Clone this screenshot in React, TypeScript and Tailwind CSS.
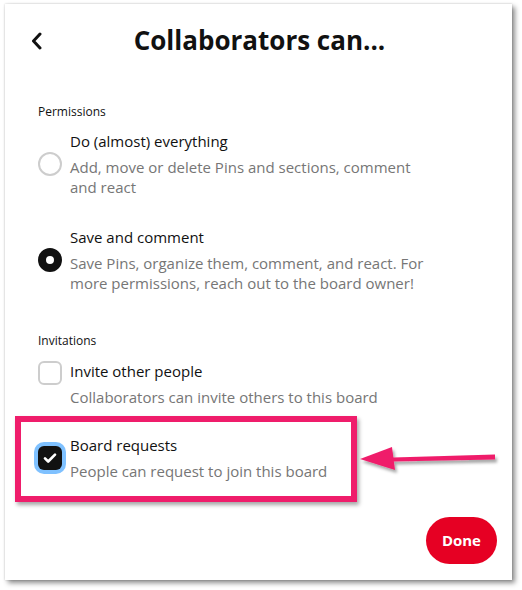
import { ReactNode } from "react";

const FONT = { fontFamily: '"Open Sans", "Noto Sans", "Liberation Sans", sans-serif' };

function Radio({ checked }: { checked?: boolean }) {
  return checked ? (
    <span className="w-6 h-6 shrink-0 rounded-full border-[8px] border-[#111111] bg-white" />
  ) : (
    <span className="w-6 h-6 shrink-0 rounded-full border-2 border-[#cdcdcd] bg-white" />
  );
}

function Checkbox({ checked }: { checked?: boolean }) {
  if (!checked) {
    return <span className="w-6 h-6 shrink-0 rounded-[6px] border-2 border-[#cdcdcd] bg-white" />;
  }
  return (
    <span className="w-6 h-6 shrink-0 rounded-[6px] bg-[#111111] flex items-center justify-center ring-4 ring-[#7fc1ff]">
      <svg width="16" height="16" viewBox="0 0 24 24" fill="none">
        <path d="M4.5 12.5l4.8 4.8L19.5 7" stroke="white" strokeWidth="4" strokeLinecap="round" strokeLinejoin="round" />
      </svg>
    </span>
  );
}

function Option({
  control,
  title,
  desc,
  align = "items-center",
}: {
  control: ReactNode;
  title: string;
  desc: ReactNode;
  align?: string;
}) {
  return (
    <div className={`flex ${align} gap-2`}>
      {control}
      <div className="flex flex-col">
        <div className="text-[15px] leading-5 text-[#111111]">{title}</div>
        <div className="mt-[6px] text-[15px] leading-5 text-[#767676]">{desc}</div>
      </div>
    </div>
  );
}

export default function App() {
  return (
    <div className="relative w-[522px] h-[590px] bg-white pt-[4px] pl-[5px]" style={FONT}>
      {/* card */}
      <div className="w-[507px] h-[576px] bg-white shadow-[3px_3px_5px_rgba(0,0,0,0.45),0_0_2px_rgba(0,0,0,0.2)] flex flex-col pt-[18px] pl-[33px] pr-[15px]">
        {/* header */}
        <div className="relative h-9 flex items-center justify-center -ml-[33px] -mr-[15px]">
          <svg className="absolute left-[25px] top-[10px]" width="14" height="18" viewBox="0 0 14 18" fill="none">
            <path d="M10 2L3.5 9L10 16" stroke="#111111" strokeWidth="3" strokeLinecap="round" strokeLinejoin="round" />
          </svg>
          <h1 className="text-[26px] leading-9 font-bold text-[#111111] pl-[2px]">Collaborators can...</h1>
        </div>

        <div className="mt-[46px] text-[12px] leading-4 text-[#111111]">Permissions</div>
        <div className="mt-[11px]">
          <Option
            control={<Radio />}
            title="Do (almost) everything"
            desc={<>Add, move or delete Pins and sections, comment<br />and react</>}
          />
        </div>
        <div className="mt-[30px]">
          <Option
            control={<Radio checked />}
            title="Save and comment"
            desc={<>Save Pins, organize them, comment, and react. For<br />more permissions, reach out to the board owner!</>}
          />
        </div>

        <div className="mt-[40px] text-[12px] leading-4 text-[#111111]">Invitations</div>
        <div className="mt-[12px]">
          <Option
            control={<Checkbox />}
            align="items-start"
            title="Invite other people"
            desc="Collaborators can invite others to this board"
          />
        </div>
        <div className="mt-[28px]">
          <Option
            control={<Checkbox checked />}
            title="Board requests"
            desc="People can request to join this board"
          />
        </div>

        <div className="mt-[36px] flex justify-end">
          <button className="h-[47px] px-4 rounded-full bg-[#e60023] text-white text-[15px] font-bold">Done</button>
        </div>
      </div>

      {/* annotation box */}
      <div className="absolute left-[15px] top-[416px] w-[342px] h-[86px] border-[6px] border-[#ef1d6b] shadow-[2px_3px_4px_rgba(0,0,0,0.35)]" />
      {/* annotation arrow */}
      <svg className="absolute left-[355px] top-[440px]" width="150" height="40" viewBox="0 0 150 40" fill="none">
        <defs>
          <filter id="sh" x="-10%" y="-30%" width="130%" height="180%">
            <feDropShadow dx="2" dy="3" stdDeviation="1.5" floodColor="#000" floodOpacity="0.35" />
          </filter>
        </defs>
        <g filter="url(#sh)">
          <path d="M38 17.5 L140 14.5 L140 19.5 L38 21.5 Z" fill="#ef1d6b" />
          <path d="M5 19 L37 7 L40 30 Z" fill="#ef1d6b" />
        </g>
      </svg>
    </div>
  );
}
